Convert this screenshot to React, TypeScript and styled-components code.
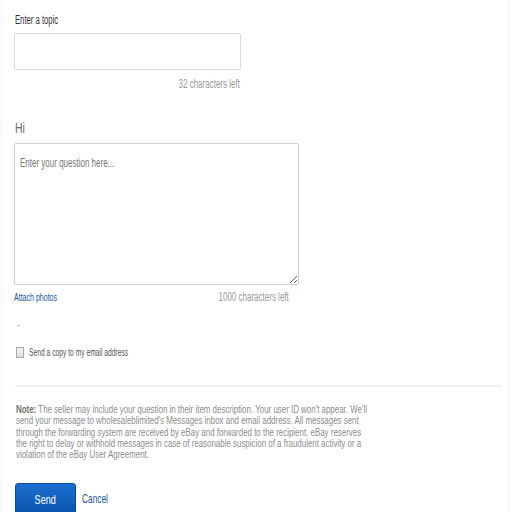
import React from 'react';
import styled, { createGlobalStyle, css } from 'styled-components';

const GlobalStyle = createGlobalStyle`
  html, body {
    margin: 0;
    padding: 0;
    background: #fff;
    overflow: hidden;
  }
  body {
    font-family: "Liberation Sans", Arial, sans-serif;
  }
`;

// the reference renders its text in a very condensed face
const squeeze = css`
  display: inline-block;
  white-space: nowrap;
  transform: scaleX(0.64);
  transform-origin: left center;
`;

const Page = styled.div`
  width: 508px;
  height: 512px;
  margin-left: 1px;
  border-left: 1px solid #f2f2f2;
  border-right: 1px solid #f2f2f2;
  padding: 13px 0 0 12px;
  box-sizing: border-box;
  display: flex;
  flex-direction: column;
`;

const Label = styled.span`
  ${squeeze};
  font-size: 12px;
  line-height: 14px;
  color: #333;
  margin-left: 1px;
`;

const Field = styled.div<{ width: number }>`
  display: flex;
  flex-direction: column;
  width: ${({ width }) => width}px;
`;

const TopicInput = styled.input`
  box-sizing: border-box;
  width: 100%;
  height: 37px;
  margin-top: 6px;
  border: 1px solid #dcdcdc;
  border-radius: 2px;
  outline: none;
  padding: 0 6px;
`;

const Counter = styled.div<{ offset?: number }>`
  display: flex;
  justify-content: flex-end;
  margin-top: ${({ offset }) => offset ?? 0}px;
  padding-right: 1px;
`;

const CounterText = styled.span`
  ${squeeze};
  transform-origin: right center;
  font-size: 12.5px;
  line-height: 14px;
  color: #9a9a9a;
`;

const Greeting = styled.span`
  ${squeeze};
  transform: scaleX(0.7);
  margin-top: 29px;
  margin-left: 1px;
  font-size: 15px;
  line-height: 16px;
  color: #666;
`;

const AreaWrap = styled.div`
  position: relative;
  width: 285px;
  margin-top: 7px;
`;

const Question = styled.textarea`
  display: block;
  box-sizing: border-box;
  width: 285px;
  height: 142px;
  border: 1px solid #cfcfcf;
  border-radius: 2px;
  outline: none;
  padding: 10px 6px;
  font-family: inherit;
  font-size: 11px;
  color: #333;
  resize: both;

  &::placeholder {
    color: transparent;
  }

  &:not(:placeholder-shown) + span {
    display: none;
  }
`;

const Hint = styled.span`
  ${squeeze};
  position: absolute;
  left: 6px;
  top: 13px;
  font-size: 12.5px;
  line-height: 14px;
  color: #777;
  pointer-events: none;
`;

const MetaRow = styled.div`
  display: flex;
  justify-content: space-between;
  align-items: center;
  width: 275px;
  margin-top: 5px;
`;

const Link = styled.a<{ size?: number }>`
  ${squeeze};
  font-size: ${({ size }) => size ?? 11}px;
  line-height: 14px;
  color: #2155a5;
  text-decoration: none;
  cursor: pointer;
`;

const Dot = styled.span`
  margin-top: 14px;
  margin-left: 3px;
  font-size: 9px;
  line-height: 14px;
  color: #999;
`;

const CheckRow = styled.label`
  display: flex;
  align-items: center;
  gap: 5px;
  margin-top: 13px;
  cursor: pointer;
`;

const Box = styled.input`
  appearance: none;
  box-sizing: border-box;
  width: 8px;
  height: 11px;
  margin: 0 0 0 2px;
  border: 1px solid #a8a8a8;
  background: linear-gradient(#f4f4f4, #dcdcdc);

  &:checked {
    background: #2155a5;
  }
`;

const CheckText = styled.span`
  ${squeeze};
  transform: scaleX(0.61);
  font-size: 11px;
  line-height: 14px;
  color: #555;
`;

const Divider = styled.hr`
  width: 487px;
  margin: 26px 0 0 1px;
  border: none;
  border-top: 2px solid #f0f0f0;
`;

const Note = styled.p`
  ${squeeze};
  transform: scaleX(0.72);
  transform-origin: left top;
  margin: 17px 0 0 2px;
  font-size: 11px;
  line-height: 11.3px;
  color: #8c8c8c;

  strong {
    color: #707070;
  }
`;

const Actions = styled.div`
  display: flex;
  align-items: center;
  gap: 6px;
  margin-top: 23px;
  margin-left: 1px;
`;

const SendButton = styled.button`
  width: 61px;
  height: 32px;
  padding: 0;
  border: 1px solid #0b4796;
  border-radius: 3px;
  background: linear-gradient(#1a6fd0, #0a52ad);
  cursor: pointer;
`;

const SendText = styled.span`
  ${squeeze};
  transform: scaleX(0.7);
  transform-origin: center;
  font-size: 13px;
  color: #fff;
`;

const noteLines = [
  "The seller may include your question in their item description. Your user ID won't appear. We'll",
  "send your message to wholesaleblimited's Messages inbox and email address. All messages sent",
  'through the forwarding system are received by eBay and forwarded to the recipient. eBay reserves',
  'the right to delay or withhold messages in case of reasonable suspicion of a fraudulent activity or a',
  'violation of the eBay User Agreement.',
];

const App: React.FC = () => (
  <>
    <GlobalStyle />
    <Page>
      <Field width={227}>
        <Label>Enter a topic</Label>
        <TopicInput type="text" maxLength={32} />
        <Counter offset={7}>
          <CounterText>32 characters left</CounterText>
        </Counter>
      </Field>

      <Greeting>Hi</Greeting>
      <AreaWrap>
        <Question placeholder=" " maxLength={1000} />
        <Hint>Enter your question here...</Hint>
      </AreaWrap>

      <MetaRow>
        <Link>Attach photos</Link>
        <CounterText>1000 characters left</CounterText>
      </MetaRow>

      <Dot>-</Dot>

      <CheckRow>
        <Box type="checkbox" />
        <CheckText>Send a copy to my email address</CheckText>
      </CheckRow>

      <Divider />

      <Note>
        <strong>Note:</strong> {noteLines[0]}
        {noteLines.slice(1).map((line) => (
          <React.Fragment key={line}>
            <br />
            {line}
          </React.Fragment>
        ))}
      </Note>

      <Actions>
        <SendButton type="button">
          <SendText>Send</SendText>
        </SendButton>
        <Link size={13}>Cancel</Link>
      </Actions>
    </Page>
  </>
);

export default App;
